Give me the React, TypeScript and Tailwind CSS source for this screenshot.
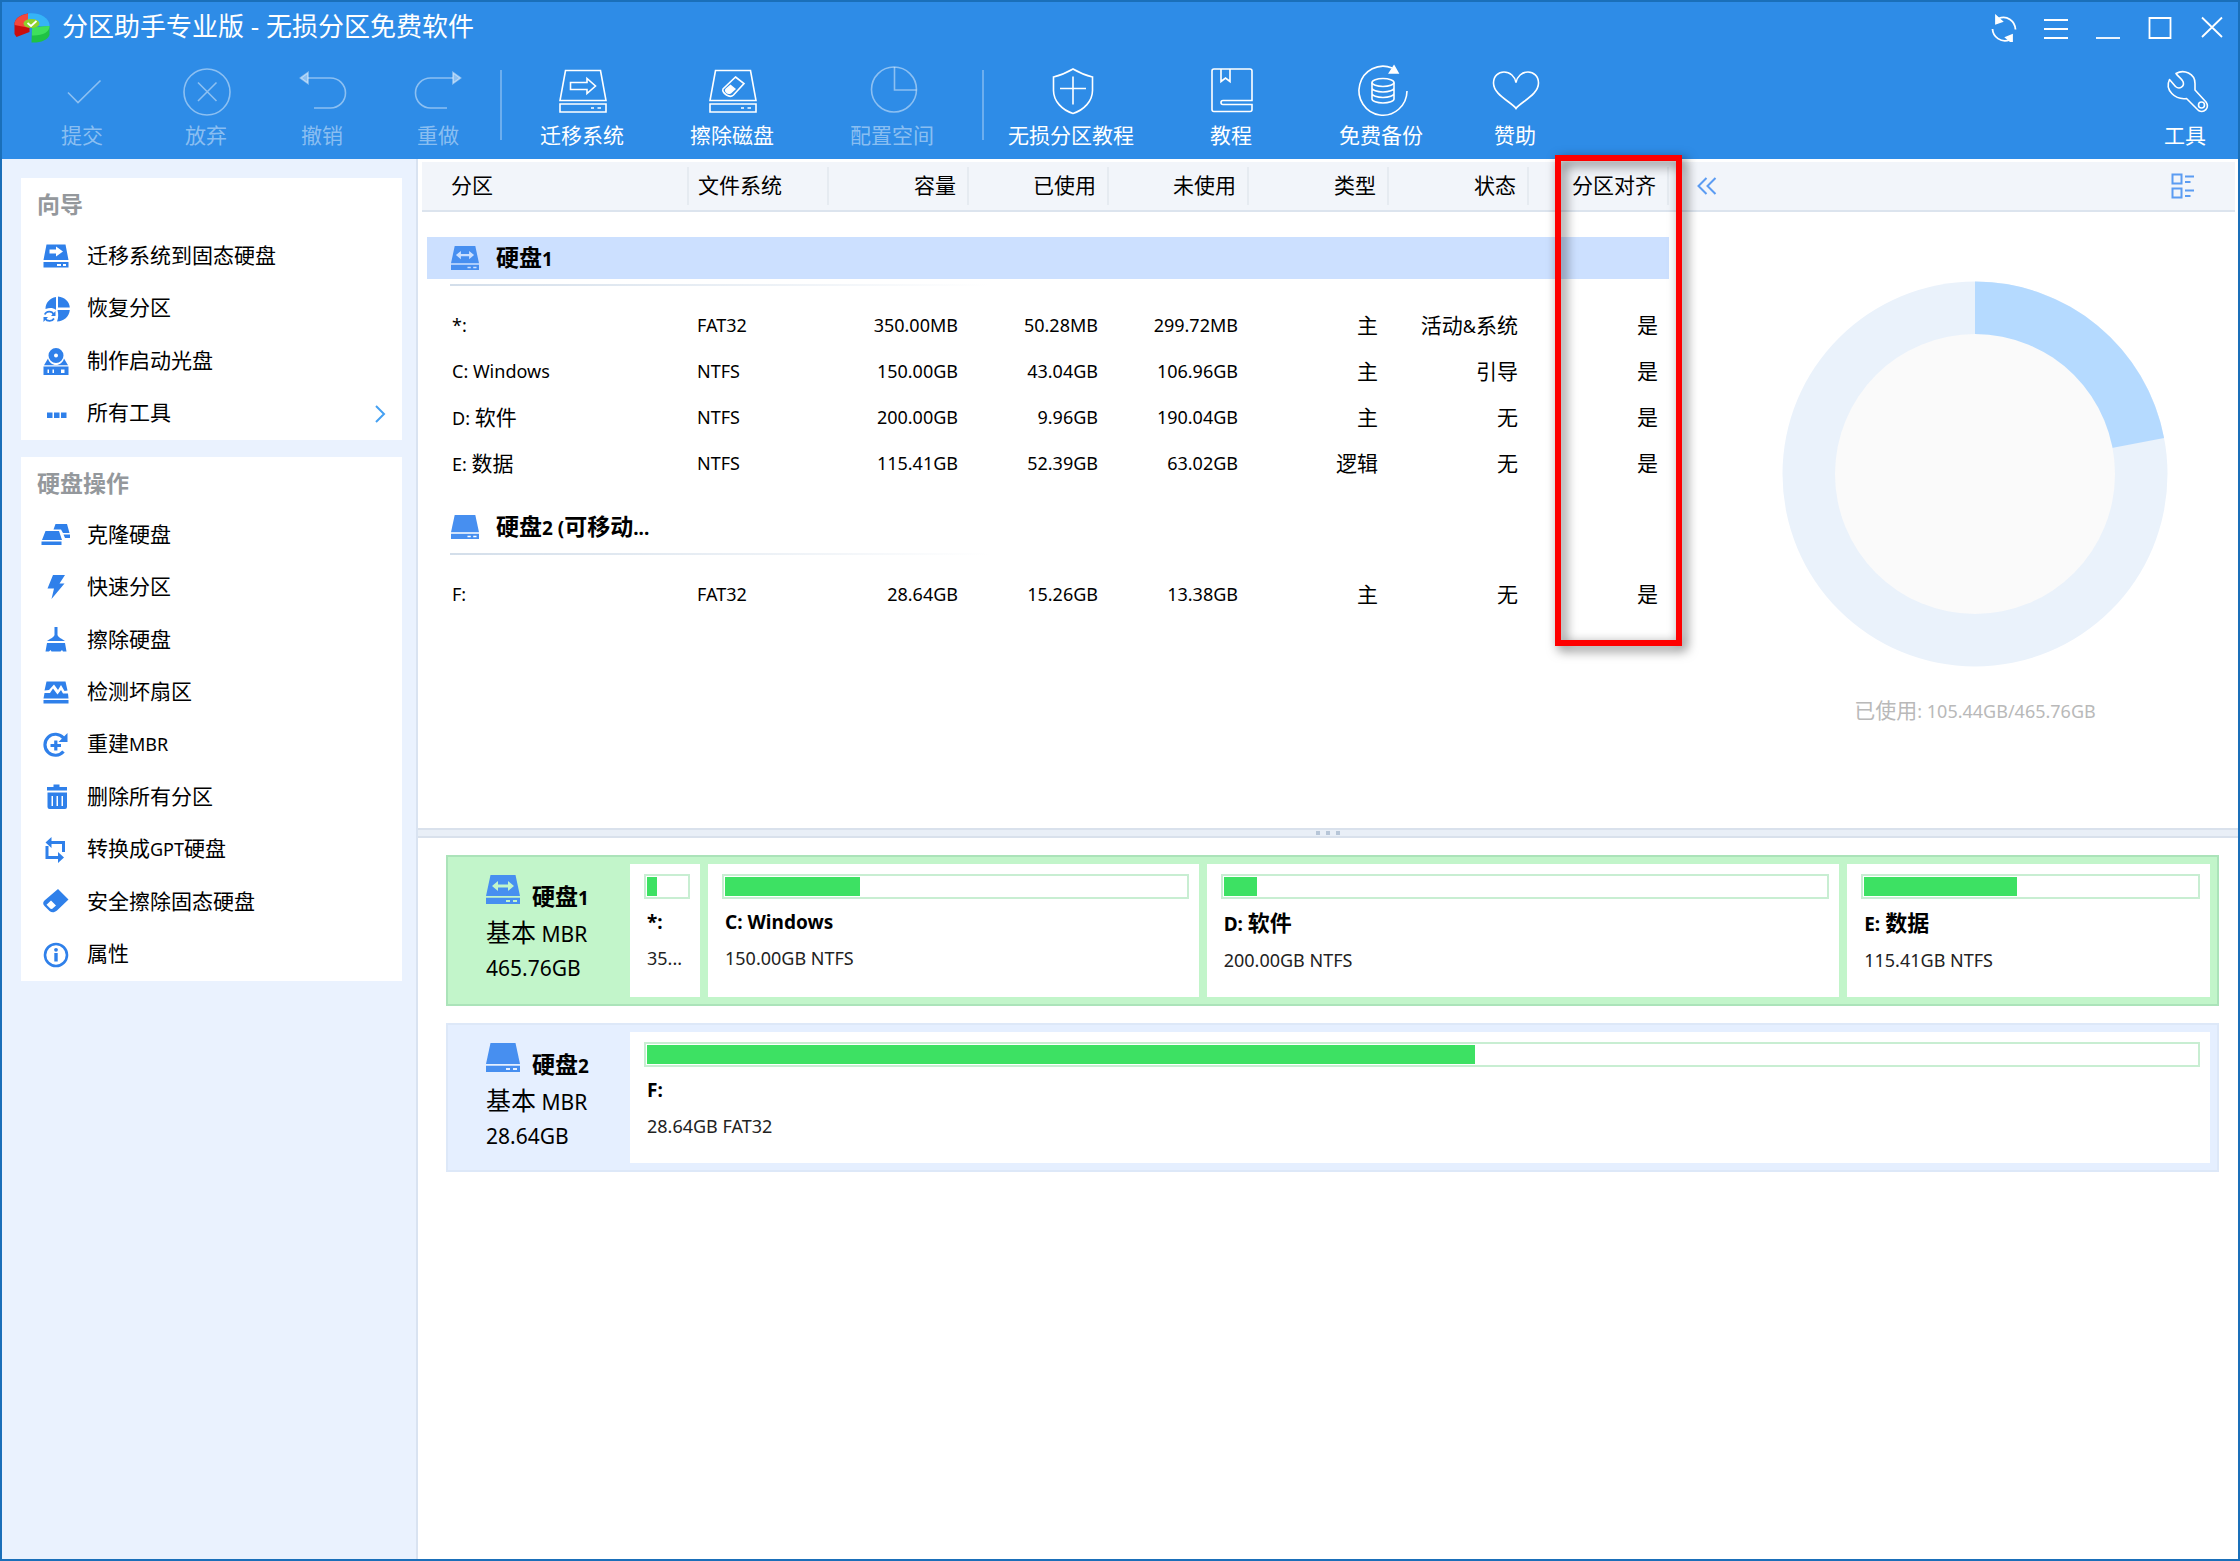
import { clsx } from "clsx";
import { useState, type ReactNode } from "react";

type Partition = {
  name: string;
  fs: string;
  size: string;
  used: string;
  free: string;
  type: string;
  status: string;
  aligned: string;
};

type Block = { name: string; info: string; fill: number; grow: number };

const COLUMNS = ["分区", "文件系统", "容量", "已使用", "未使用", "类型", "状态", "分区对齐"];

const DISKS: { title: string; system: boolean; rows: Partition[] }[] = [
  {
    title: "硬盘1",
    system: true,
    rows: [
      { name: "*:", fs: "FAT32", size: "350.00MB", used: "50.28MB", free: "299.72MB", type: "主", status: "活动&系统", aligned: "是" },
      { name: "C: Windows", fs: "NTFS", size: "150.00GB", used: "43.04GB", free: "106.96GB", type: "主", status: "引导", aligned: "是" },
      { name: "D: 软件", fs: "NTFS", size: "200.00GB", used: "9.96GB", free: "190.04GB", type: "主", status: "无", aligned: "是" },
      { name: "E: 数据", fs: "NTFS", size: "115.41GB", used: "52.39GB", free: "63.02GB", type: "逻辑", status: "无", aligned: "是" },
    ],
  },
  {
    title: "硬盘2 (可移动...",
    system: false,
    rows: [
      { name: "F:", fs: "FAT32", size: "28.64GB", used: "15.26GB", free: "13.38GB", type: "主", status: "无", aligned: "是" },
    ],
  },
];

const MAPS: { title: string; system: boolean; size: string; blocks: Block[] }[] = [
  {
    title: "硬盘1",
    system: true,
    size: "465.76GB",
    blocks: [
      { name: "*:", info: "35...", fill: 24, grow: 0 },
      { name: "C: Windows", info: "150.00GB NTFS", fill: 29.4, grow: 467 },
      { name: "D: 软件", info: "200.00GB NTFS", fill: 5.6, grow: 609 },
      { name: "E: 数据", info: "115.41GB NTFS", fill: 46, grow: 339 },
    ],
  },
  {
    title: "硬盘2",
    system: false,
    size: "28.64GB",
    blocks: [{ name: "F:", info: "28.64GB FAT32", fill: 53.4, grow: 1 }],
  },
];

/* Chinese runs are set a little larger than the Latin text around them */
function Mixed({ text, cjk = "text-[21px]" }: { text: string; cjk?: string }) {
  return (
    <>
      {text.split(/([\u2e80-\u9fff]+)/).filter(Boolean).map((part, i) =>
        /[\u2e80-\u9fff]/.test(part) ? <span key={i} className={cjk}>{part}</span> : part,
      )}
    </>
  );
}

/* ---------- icons ---------- */

function LineIcon({ children }: { children: ReactNode }) {
  return (
    <svg viewBox="0 0 48 48" className="ml-0.5 size-12 overflow-visible" fill="none" stroke="currentColor" strokeWidth="1.6" aria-hidden="true">
      {children}
    </svg>
  );
}

const diskOutline = (
  <>
    <path d="M6.5 2.5h35L47 32.5H1zM1 36h46v8H1z" />
    <path d="M32 40h3M38.500 40h3.500" />
  </>
);

const icons = {
  check: <LineIcon><path d="M9 24.500 19 34.500 41.500 12.500" /></LineIcon>,
  discard: <LineIcon><circle cx="24" cy="24" r="23" /><path d="m15 14.500 18.500 18.500M33.500 14.500 15 33" /></LineIcon>,
  undo: <LineIcon><path d="M9 10h22.500a15 15 0 0 1 0 30H15" /><path d="M1.500 10 9 4.500v11z" fill="currentColor" /></LineIcon>,
  redo: <LineIcon><path d="M38 10H15.500a15 15 0 0 0 0 30H32" /><path d="M45.500 10 38 4.500v11z" fill="currentColor" /></LineIcon>,
  migrate: <LineIcon>{diskOutline}<path d="M11.500 14.500h16.500v-4l8.500 7.500-8.500 7.500v-4H11.500z" /></LineIcon>,
  wipe: (
    <LineIcon>
      {diskOutline}
      <path d="M26.500 9 35 15.500 24.500 27c-2 1.800-4.500 1.600-7 0-2.800-2-4.500-4-3.500-6z" />
      <path d="m21.500 16.500 5.500 4.500-5 4.500c-2 1-3.500.5-5-.7-1.300-1.300-1.500-2.500-.5-4z" fill="currentColor" stroke="none" />
    </LineIcon>
  ),
  space: <LineIcon><circle cx="25" cy="21.500" r="22.500" /><path d="M25.500-1v23h22" /></LineIcon>,
  shield: (
    <LineIcon>
      <path d="M25 1C19 4.500 12 7.500 5.500 9v13.500C5.500 33 14 42 25 45.500 36 42 44.500 33 44.500 22.500V9C38 7.500 31 4.500 25 1z" />
      <path d="M12 20.500h26M25 8.500v28" />
    </LineIcon>
  ),
  book: (
    <LineIcon>
      <path d="M44 32.500V3a2 2 0 0 0-2-2H6a2 2 0 0 0-2 2v38.500a2 2 0 0 0 2 2h36a2 2 0 0 0 2-2v-5H15a2 2 0 0 1 0-4z" />
      <path d="M13 1v12.500l4.500-3.500 4.500 3.500V1" />
    </LineIcon>
  ),
  backup: (
    <LineIcon>
      <path d="M49 23A24 24.500 0 1 1 34 0" />
      <path d="M36-2 40 5h-8.500z" fill="currentColor" />
      <ellipse cx="25" cy="14.500" rx="11" ry="4" />
      <path d="M14 14.500V31c0 2.200 5 4 11 4s11-1.800 11-4V14.500M14 20c0 2.200 5 4 11 4s11-1.800 11-4M14 25.500c0 2.200 5 4 11 4s11-1.800 11-4" />
    </LineIcon>
  ),
  heart: <LineIcon><path d="M24 40.500C19.500 34 1.500 27 1.500 15 1.500 8 6.500 4 12 4c6 0 11 4.500 12 10.500C25 8.500 30 4 36 4c5.500 0 10.500 4 10.500 11 0 12-18 19-22.500 25.500z" /></LineIcon>,
  wrench: (
    <LineIcon>
      <path d="M14 5.500c8-4.500 19 0 19 10V22l11 12c4 6-2 11.500-7.500 8.500L24.500 30.500C13 32 2.500 22 7.500 11.500l6 7c4 3.500 9.500 0 7.500-5-1.500-3-5-5-7-8z" strokeLinejoin="round" />
      <circle cx="39.500" cy="37" r="3" />
    </LineIcon>
  ),
};

function DiskIcon({ arrows, className }: { arrows: boolean; className: string }) {
  return (
    <svg viewBox="0 0 34 29" className={clsx("shrink-0 text-[#478ff0]", className)} fill="currentColor" aria-hidden="true">
      <path
        fillRule="evenodd"
        d={clsx("M4.500 0h25L34 21H0z", arrows && "M6 11l6-5v3.500h10V6l6 5-6 5v-3.500H12V16z")}
      />
      <path fillRule="evenodd" d="M0 22.800h34V29H0zM20 25v2h4v-2zM27 25v2h4v-2z" />
    </svg>
  );
}

function SolidIcon({ children }: { children: ReactNode }) {
  return (
    <svg viewBox="0 0 26 26" className="size-[26px] overflow-visible text-[#2f80ea]" fill="currentColor" aria-hidden="true">
      {children}
    </svg>
  );
}

const WIZARDS = [
  {
    label: "迁移系统到固态硬盘",
    icon: (
      <SolidIcon>
        <path fillRule="evenodd" d="M3.500 1.500h19L25.500 17H.5zM6.500 6.500v4H13v3l7-5-7-5v3z" />
        <path fillRule="evenodd" d="M.5 19h25v5.500H.5zM14 21v2h4v-2zM20 21v2h3v-2z" />
      </SolidIcon>
    ),
  },
  {
    label: "恢复分区",
    icon: (
      <SolidIcon>
        <path d="M13 1v12.500h-.8C10 11.500 6.500 11.500 2.500 13 2.500 7 6.500 2 13 1zM15 .5C22 1 26.500 6 26.800 11.500H15zM14.500 14h12.300c-.5 6.500-6 11.500-12.800 11.500 1.500-3.500 1.500-7.500.5-11.500z" />
        <path d="M1.800 18.500c1.500-3.800 7-4 9 0M11 22.500c-1.800 3.200-6.800 3.200-8.800.3" fill="none" stroke="currentColor" strokeWidth="1.800" />
        <path d="M12.500 15v5H8zM.5 26v-5H5z" />
      </SolidIcon>
    ),
  },
  {
    label: "制作启动光盘",
    icon: (
      <SolidIcon>
        <path fillRule="evenodd" d="M13 0a7.500 7.500 0 1 1 0 15 7.500 7.500 0 0 1 0-15zm0 5.500a2 2 0 1 0 0 4 2 2 0 0 0 0-4z" />
        <path d="M5 10.500c1 4 4.500 6.500 8 6.500s7-2.500 8-6.500l4 6.800H1z" />
        <path fillRule="evenodd" d="M.5 18.500h25V27H.5zM4.500 21.500v3.500H6v-3.500zM9.500 21.500v3.500H11v-3.500zM18 21.500v3.500h3.500v-3.500z" />
      </SolidIcon>
    ),
  },
  {
    label: "所有工具",
    more: true,
    icon: <SolidIcon><path d="M4 11.500h5.500V17H4zM11 11.500h5.500V17H11zM18 11.500h5.500V17H18z" /></SolidIcon>,
  },
];

const OPERATIONS = [
  {
    label: "克隆硬盘",
    icon: (
      <SolidIcon>
        <path d="M12.500 2h11.500l2.500 9H20L18 7.500h-7.500zM20.500 12.500h6.500v3.500h-5z" />
        <path d="M2.500 9h13.500l3 9H-1zM-1.500 19.500h20V23h-20z" />
      </SolidIcon>
    ),
  },
  { label: "快速分区", icon: <SolidIcon><path d="M10 0h12l-5.500 8.500h5L8.500 24l2.500-10.500H4.500z" /></SolidIcon> },
  {
    label: "擦除硬盘",
    icon: (
      <SolidIcon>
        <path d="M11.500 0h3v8c1 3 4.500 3.500 7.500 6H4c3-2.500 6.500-3 7.500-6zM4 16h18l1.500 8.500h-3.500L19 23l-1.500 1.500H8.500L7.500 23 6 24.500H2.500z" />
      </SolidIcon>
    ),
  },
  {
    label: "检测坏扇区",
    icon: (
      <SolidIcon>
        <path d="M3.500 1.500h19l2 9-3 .5-3.500-6-3 5-4-5.500L6 10l-4.500.5z" />
        <path d="M1.500 13H7l3-4.500 4.500 6L18 10l2 3.500h5l.5 5H.5zM.5 20h25v3.500H.5z" />
      </SolidIcon>
    ),
  },
  {
    label: "重建MBR",
    icon: (
      <SolidIcon>
        <path d="M20.500 19.500A10.500 10.500 0 1 1 20.500 6" fill="none" stroke="currentColor" strokeWidth="3.200" />
        <path d="M24.500 1v9h-9zM11.200 8.500h3.200V12H18v3h-3.600v3.500h-3.200V15H7.500v-3h3.700z" />
      </SolidIcon>
    ),
  },
  {
    label: "删除所有分区",
    icon: (
      <SolidIcon>
        <path d="M4 3h6.500V.5h6V3H24v3.500H4z" />
        <path fillRule="evenodd" d="M4.500 8.500H24V23a2 2 0 0 1-2 2H6.500a2 2 0 0 1-2-2zM8.500 12v10H10V12zM13.500 12v10H15V12zM18.500 12v10H20V12z" />
      </SolidIcon>
    ),
  },
  {
    label: "转换成GPT硬盘",
    icon: (
      <SolidIcon>
        <path d="M7 5.500h13.500V15M4 9v11.500h12" fill="none" stroke="currentColor" strokeWidth="3" />
        <path d="M8.500 0v11L2.500 5.500zM15 15l6 5.500-6 5.500z" />
      </SolidIcon>
    ),
  },
  {
    label: "安全擦除固态硬盘",
    icon: (
      <SolidIcon>
        <path fillRule="evenodd" d="M15 0 25.500 10.500 14 21.500c-3 2.500-5.500 2-7.500.5L1.500 17c-2-2-1.500-4 0-5.500zM8 11.500l-4.500 4.200 4 4 1.500.3 4-3.500z" />
      </SolidIcon>
    ),
  },
  {
    label: "属性",
    icon: (
      <SolidIcon>
        <circle cx="13" cy="13" r="11" fill="none" stroke="currentColor" strokeWidth="2.600" />
        <circle cx="13" cy="7.800" r="1.900" />
        <path d="M11.300 11h3.400v8.500h-3.400z" />
      </SolidIcon>
    ),
  },
];

const TOOLBAR = [
  [
    { label: "提交", icon: icons.check, width: "w-[124px]", disabled: true },
    { label: "放弃", icon: icons.discard, width: "w-[124px]", disabled: true },
    { label: "撤销", icon: icons.undo, width: "w-[108px]", disabled: true },
    { label: "重做", icon: icons.redo, width: "w-[124px]", disabled: true },
  ],
  [
    { label: "迁移系统", icon: icons.migrate, width: "w-40" },
    { label: "擦除磁盘", icon: icons.wipe, width: "w-[140px]" },
    { label: "配置空间", icon: icons.space, width: "w-[180px]", disabled: true },
  ],
  [
    { label: "无损分区教程", icon: icons.shield, width: "w-[174px]" },
    { label: "教程", icon: icons.book, width: "w-[146px]" },
    { label: "免费备份", icon: icons.backup, width: "w-[154px]" },
    { label: "赞助", icon: icons.heart, width: "w-[114px]" },
  ],
];

function Logo() {
  return (
    <svg viewBox="0 0 36 30" className="h-[30px] w-9" aria-hidden="true">
      <path d="M14 .5C6 2 0 6 .5 12v9l2 3 13-5V10z" fill="#c90d0d" />
      <path d="M14 .5C6 2 0 6 .5 12l13 2.500L17 9z" fill="#f4473c" />
      <path d="M14 .5C24-1 35 4 35.500 12L35 15l-15-3-6-4z" fill="#35b4f7" />
      <path d="M18 14.500 35.500 13v9c-2 5-9 8-18 7.500z" fill="#1fc244" />
      <path d="M18 14.500 35.500 13c0 6-7 10-17.500 9.500z" fill="#3ee05c" />
      <ellipse cx="17.500" cy="10.500" rx="8" ry="4.500" fill="#8ed12a" />
      <path d="m13.500 10 3.500 3 5.500-5" fill="none" stroke="#fff" strokeWidth="1.800" />
    </svg>
  );
}

/* ---------- panels ---------- */

function WindowButton({ label, children }: { label: string; children: ReactNode }) {
  return (
    <button aria-label={label} className="flex h-14 w-[52px] items-center justify-center">
      <svg viewBox="0 0 26 28" className="h-7 w-[26px]" fill="none" stroke="currentColor" strokeWidth="1.800" aria-hidden="true">
        {children}
      </svg>
    </button>
  );
}

function ToolButton({ label, icon, width, disabled }: { label: string; icon: ReactNode; width: string; disabled?: boolean }) {
  return (
    <button
      disabled={disabled}
      className={clsx("flex shrink-0 flex-col items-center gap-[3px] text-[21px] leading-8", width, disabled ? "text-white/45" : "text-white")}
    >
      {icon}
      {label}
    </button>
  );
}

function Header() {
  return (
    <header className="bg-[#2e8ce7] pb-2 text-white">
      <div className="flex h-[52px] items-center justify-between pl-3">
        <h1 className="flex items-center gap-3 text-[26px] leading-8">
          <Logo />
          <span className="pb-1">分区助手专业版 - 无损分区免费软件</span>
        </h1>
        <div className="flex">
          <WindowButton label="刷新">
            <path d="M7.500 4.500C16 1 24 7 24.500 15.500M18.500 26C10 29 2 23 1.500 15" />
            <path d="M5 2v7.500l6-2zM21 28.500V21l-6 2.500z" fill="currentColor" />
          </WindowButton>
          <WindowButton label="菜单"><path d="M1 6h24M1 15h24M1 24h24" /></WindowButton>
          <WindowButton label="最小化"><path d="M1 24h24" /></WindowButton>
          <WindowButton label="最大化"><path d="M2.500 4h21v20h-21z" /></WindowButton>
          <WindowButton label="关闭"><path d="m3 3.500 20 19.500M23 3.500 3 23" /></WindowButton>
        </div>
      </div>
      <div className="flex justify-between pt-[14px]">
        <div className="flex pl-[18px]">
          {TOOLBAR.map((group, i) => (
            <div key={i} className="flex">
              {i > 0 && <div className="mt-0.5 h-[70px] w-0.5 bg-white/30" />}
              {group.map((t) => <ToolButton key={t.label} {...t} />)}
            </div>
          ))}
        </div>
        <ToolButton label="工具" icon={icons.wrench} width="w-[106px]" />
      </div>
    </header>
  );
}

function SidePanel({ title, items, className }: {
  title: string;
  items: { label: string; icon: ReactNode; more?: boolean }[];
  className: string;
}) {
  return (
    <section className="bg-white">
      <h2 className="flex h-[52px] items-center pl-4 text-[23px] leading-8 font-bold text-[#94989c]">{title}</h2>
      <ul className={clsx("grid auto-rows-fr", className)}>
        {items.map((item) => (
          <li key={item.label}>
            <button className="flex h-full w-full items-center pr-4 pl-[22px] text-left leading-8">
              {item.icon}
              <span className="flex-1 pb-0.5 pl-[18px]"><Mixed text={item.label} /></span>
              {item.more && (
                <svg viewBox="0 0 12 18" className="h-[18px] w-3" fill="none" stroke="#44a0f2" strokeWidth="2" aria-hidden="true">
                  <path d="m2 1 8 8-8 8" />
                </svg>
              )}
            </button>
          </li>
        ))}
      </ul>
    </section>
  );
}

function PartitionTable({ selected, onSelect }: { selected: string; onSelect: (title: string) => void }) {
  return (
    <table className="w-full table-fixed">
      <colgroup>
        <col />
        {COLUMNS.slice(1).map((c) => <col key={c} className="w-[140px]" />)}
      </colgroup>
      <thead>
        <tr className="h-[49px] border-b-2 border-[#dce4ee] bg-[#f2f5fa]">
          {COLUMNS.map((c, i) => (
            <th key={c} className="p-0 text-[21px] leading-8 font-normal">
              <div className={clsx("flex h-[38px] items-center border-r-2 border-[#e6ebf1] pb-0.5", i === 0 ? "pl-[29px]" : i === 1 ? "pl-[9px]" : "justify-end pr-[11px]")}>
                {c}
              </div>
            </th>
          ))}
        </tr>
      </thead>
      {DISKS.map((disk, i) => (
        <tbody key={disk.title}>
          <tr>
            <th colSpan={8} className={clsx("p-0 pl-[5px] text-left", i === 0 ? "pt-[25px]" : "pt-5")}>
              <button
                onClick={() => onSelect(disk.title)}
                className={clsx("flex h-[42px] w-full items-center gap-[17px] pl-6 text-[19px] leading-8 font-bold", selected === disk.title && "bg-[#cce0ff]")}
              >
                <DiskIcon arrows={disk.system} className="h-6 w-7" />
                <span><Mixed text={disk.title} cjk="text-[23px]" /></span>
              </button>
              <div className="mt-[5px] mb-4 ml-[23px] h-0.5 w-[540px] bg-linear-to-r from-[#d3deea] to-white" />
            </th>
          </tr>
          {disk.rows.map((row) => (
            <tr key={row.name} className="h-[46px] text-right leading-8">
              <td className="p-0 pl-[30px] text-left"><Mixed text={row.name} /></td>
              <td className="p-0 pl-2 text-left">{row.fs}</td>
              {[row.size, row.used, row.free, row.type, row.status, row.aligned].map((v, n) => (
                <td key={n} className="p-0 pr-[11px]"><Mixed text={v} /></td>
              ))}
            </tr>
          ))}
        </tbody>
      ))}
    </table>
  );
}

function UsagePanel({ used, total }: { used: number; total: number }) {
  // the ring only shows whole percents
  const percent = Math.floor((used / total) * 100);
  const angle = (percent / 100) * 2 * Math.PI;
  const x = 200 + 192.5 * Math.sin(angle);
  const y = 200 - 192.5 * Math.cos(angle);
  return (
    <aside className="w-[566px] shrink-0">
      <div className="flex h-[50px] items-center justify-between border-b-2 border-[#dce4ee] bg-[#f2f5fa] pr-10 pl-7 text-[#5b9cf2]">
        <button aria-label="收起">
          <svg viewBox="0 0 20 18" className="h-[18px] w-5" fill="none" stroke="currentColor" strokeWidth="2" aria-hidden="true">
            <path d="M9.500 1 1.500 9l8 8M18.500 1l-8 8 8 8" />
          </svg>
        </button>
        <button aria-label="视图">
          <svg viewBox="0 0 24 26" className="h-[26px] w-6" fill="none" stroke="currentColor" strokeWidth="2" aria-hidden="true">
            <path d="M1.500 1.500h9v9h-9zM1.500 15.500h9v9h-9zM14 3.500h9M14 9h5.500M14 17.500h9M14 23h5.500" />
          </svg>
        </button>
      </div>
      <div className="flex flex-col items-center pt-[62px] pl-[46px]">
        <svg viewBox="0 0 400 400" className="size-[400px]" role="img" aria-label="已使用空间">
          <circle cx="200" cy="200" r="192.500" fill="#eaf2fb" />
          <path d={`M200 200V7.500A192.500 192.500 0 0 1 ${x} ${y}z`} fill="#b5daff" />
          <circle cx="200" cy="200" r="140" fill="#fafafa" />
        </svg>
        <p className="pt-5 leading-8 text-[#b9b9b9]"><Mixed text={`已使用: ${used}GB/${total}GB`} /></p>
      </div>
    </aside>
  );
}

function DiskMap({ title, system, size, blocks }: (typeof MAPS)[number]) {
  return (
    <div className={clsx("flex border-2", system ? "border-[#abe3b9] bg-[#c2f5ca]" : "border-[#dde8f8] bg-[#e5efff]")}>
      <div className="w-[182px] shrink-0 pt-[18px] pl-[38px]">
        <div className="flex h-10 gap-3">
          <DiskIcon arrows={system} className="h-[29px] w-[34px]" />
          <span className="self-end text-[19px] leading-[34px] font-bold"><Mixed text={title} cjk="text-[23px]" /></span>
        </div>
        <p className="text-[21px] leading-[34px]"><Mixed text="基本 MBR" cjk="text-[25px]" /></p>
        <p className="text-[21px] leading-[34px]">{size}</p>
      </div>
      <div className="flex min-w-0 flex-1 gap-2 py-[7px] pr-[7px]">
        {blocks.map((b) => (
          <div key={b.name} className={clsx("bg-white pt-2.5 pr-2.5 pb-[19px] pl-[14px]", b.grow === 0 ? "w-[70px] shrink-0" : "min-w-0 basis-0")} style={{ flexGrow: b.grow }}>
            <div className="h-[25px] border-2 border-[#c8eed2] p-px">
              <div className="h-full bg-[#3de163]" style={{ width: `${b.fill}%` }} />
            </div>
            <p className="mt-[5px] truncate pl-[3px] text-[19px] leading-9 font-bold"><Mixed text={b.name} cjk="text-[22px]" /></p>
            <p className="truncate pl-[3px] leading-9 text-[#222]">{b.info}</p>
          </div>
        ))}
      </div>
    </div>
  );
}

export default function App() {
  const [selected, setSelected] = useState("硬盘1");

  return (
    <div className="flex min-h-screen flex-col border-2 border-[#1a6fb9] bg-white font-['Noto_Sans','Noto_Sans_CJK_SC',sans-serif] text-lg text-black">
      <Header />
      <div className="flex flex-1">
        <nav className="flex w-[416px] shrink-0 flex-col gap-[17px] border-r-2 border-[#d9e3f1] bg-[#eaf2fe] pt-[19px] pr-[14px] pl-[19px]">
          <SidePanel title="向导" items={WIZARDS} className="min-h-[210px]" />
          <SidePanel title="硬盘操作" items={OPERATIONS} className="min-h-[472px]" />
        </nav>
        <main className="min-w-0 flex-1">
          <div className="flex min-h-[669px] pt-[3px] pr-[3px] pl-1">
            <div className="relative min-w-0 flex-1">
              <PartitionTable selected={selected} onSelect={setSelected} />
              {/* highlight frame over the alignment column */}
              <div className="pointer-events-none absolute -top-[7px] -right-[13px] h-[491px] w-[127px] border-[6px] border-[#fe0000] drop-shadow-[4px_4px_6px_rgba(0,0,0,0.6)]" />
            </div>
            <UsagePanel used={105.44} total={465.76} />
          </div>
          <div className="flex h-2.5 items-center justify-center gap-1.5 border-y-2 border-[#d9e1ec] bg-[#e9eff7]">
            {[0, 1, 2].map((n) => <span key={n} className="size-1 bg-[#b7c6d8]" />)}
          </div>
          <div className="flex flex-col gap-[17px] py-[17px] pr-[19px] pl-7">
            {MAPS.map((m) => <DiskMap key={m.title} {...m} />)}
          </div>
        </main>
      </div>
    </div>
  );
}
